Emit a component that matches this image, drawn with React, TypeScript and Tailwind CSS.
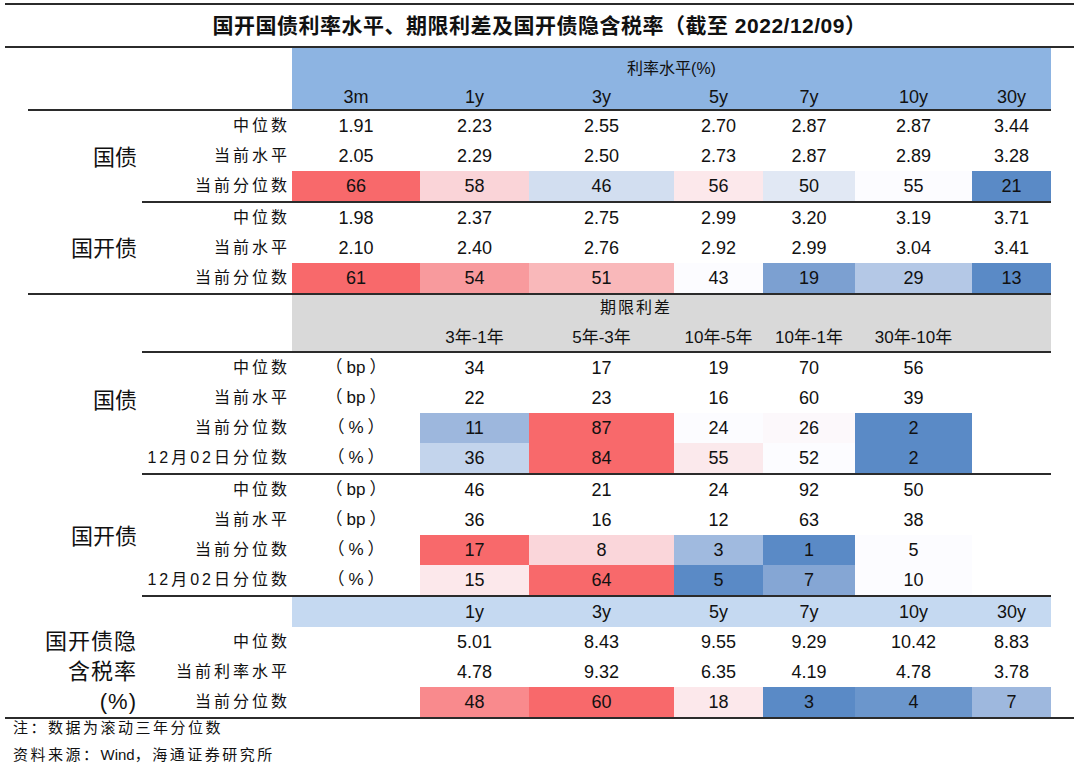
import React from 'react';

type Cell = { v: string; bg?: string };

// column widths of the data area (3m .. 30y), from x=292 to x=1051
const W = ['w-[128px]', 'w-[109px]', 'w-[145px]', 'w-[89px]', 'w-[92px]', 'w-[117px]', 'w-[79px]'];

const c = (v: string, bg?: string): Cell => ({ v, bg });

const rate = [
    {
        group: '国债',
        rows: [
            { label: '中位数', cells: ['1.91', '2.23', '2.55', '2.70', '2.87', '2.87', '3.44'].map((v) => c(v)) },
            { label: '当前水平', cells: ['2.05', '2.29', '2.50', '2.73', '2.87', '2.89', '3.28'].map((v) => c(v)) },
            {
                label: '当前分位数',
                cells: [
                    c('66', 'bg-[#F8696B]'),
                    c('58', 'bg-[#FAD4D8]'),
                    c('46', 'bg-[#D2DEF0]'),
                    c('56', 'bg-[#FCE8EB]'),
                    c('50', 'bg-[#E1E8F4]'),
                    c('55', 'bg-[#FCFCFF]'),
                    c('21', 'bg-[#5A8AC6]'),
                ],
            },
        ],
    },
    {
        group: '国开债',
        rows: [
            { label: '中位数', cells: ['1.98', '2.37', '2.75', '2.99', '3.20', '3.19', '3.71'].map((v) => c(v)) },
            { label: '当前水平', cells: ['2.10', '2.40', '2.76', '2.92', '2.99', '3.04', '3.41'].map((v) => c(v)) },
            {
                label: '当前分位数',
                cells: [
                    c('61', 'bg-[#F8696B]'),
                    c('54', 'bg-[#F89A9D]'),
                    c('51', 'bg-[#F9B8BA]'),
                    c('43', 'bg-[#FCFCFF]'),
                    c('19', 'bg-[#7CA0D1]'),
                    c('29', 'bg-[#B4C8E6]'),
                    c('13', 'bg-[#5A8AC6]'),
                ],
            },
        ],
    },
];

const spread = [
    {
        group: '国债',
        shift: 'pb-[28px]',
        rows: [
            { label: '中位数', cells: [c('bp'), c('34'), c('17'), c('19'), c('70'), c('56'), c('')] },
            { label: '当前水平', cells: [c('bp'), c('22'), c('23'), c('16'), c('60'), c('39'), c('')] },
            {
                label: '当前分位数',
                cells: [
                    c('%'),
                    c('11', 'bg-[#9DB7DD]'),
                    c('87', 'bg-[#F8696B]'),
                    c('24', 'bg-[#FCFCFF]'),
                    c('26', 'bg-[#FCF8FB]'),
                    c('2', 'bg-[#5A8AC6]'),
                    c(''),
                ],
            },
            {
                label: '12月02日分位数',
                cells: [
                    c('%'),
                    c('36', 'bg-[#C3D4EC]'),
                    c('84', 'bg-[#F8696B]'),
                    c('55', 'bg-[#FBE9EC]'),
                    c('52', 'bg-[#FCFCFF]'),
                    c('2', 'bg-[#5A8AC6]'),
                    c(''),
                ],
            },
        ],
    },
    {
        group: '国开债',
        shift: '',
        rows: [
            { label: '中位数', cells: [c('bp'), c('46'), c('21'), c('24'), c('92'), c('50'), c('')] },
            { label: '当前水平', cells: [c('bp'), c('36'), c('16'), c('12'), c('63'), c('38'), c('')] },
            {
                label: '当前分位数',
                cells: [
                    c('%'),
                    c('17', 'bg-[#F8696B]'),
                    c('8', 'bg-[#FAD6DA]'),
                    c('3', 'bg-[#A0BADF]'),
                    c('1', 'bg-[#5A8AC6]'),
                    c('5', 'bg-[#FCFCFF]'),
                    c(''),
                ],
            },
            {
                label: '12月02日分位数',
                cells: [
                    c('%'),
                    c('15', 'bg-[#FCE8EB]'),
                    c('64', 'bg-[#F8696B]'),
                    c('5', 'bg-[#5A8AC6]'),
                    c('7', 'bg-[#85A6D4]'),
                    c('10', 'bg-[#FCFCFF]'),
                    c(''),
                ],
            },
        ],
    },
];

const tax = [
    { label: '中位数', cells: [c(''), c('5.01'), c('8.43'), c('9.55'), c('9.29'), c('10.42'), c('8.83')] },
    { label: '当前利率水平', cells: [c(''), c('4.78'), c('9.32'), c('6.35'), c('4.19'), c('4.78'), c('3.78')] },
    {
        label: '当前分位数',
        cells: [
            c(''),
            c('48', 'bg-[#F98A8D]'),
            c('60', 'bg-[#F8696B]'),
            c('18', 'bg-[#FCE8EB]'),
            c('3', 'bg-[#5A8AC6]'),
            c('4', 'bg-[#6B96CC]'),
            c('7', 'bg-[#9EB8DE]'),
        ],
    },
];

// unit column: full-width style brackets, spaced out around the unit
function Unit({ u }: { u: string }) {
    return (
        <span className="text-[17px]">
            （<span className="px-[4px]">{u}</span>）
        </span>
    );
}

function Row({ label, cells, unit = false }: { label: string; cells: Cell[]; unit?: boolean }) {
    return (
        <div className="flex h-[30px]">
            <div className="w-[150px] pr-[2px] flex items-center justify-end text-[16px] tracking-[3px] whitespace-nowrap">
                {label}
            </div>
            {cells.map((cell, i) => (
                <div key={i} className={`${W[i]} ${cell.bg ?? ''} flex items-center justify-center text-[18px]`}>
                    {unit && i === 0 ? <Unit u={cell.v} /> : cell.v}
                </div>
            ))}
        </div>
    );
}

function HeadLabels({ labels }: { labels: string[] }) {
    return (
        <div className="flex">
            {labels.map((l, i) => (
                <div key={i} className={`${W[i]} text-center whitespace-nowrap`}>
                    {l}
                </div>
            ))}
        </div>
    );
}

export default function App() {
    return (
        <div className="w-[1080px] h-[767px] bg-white text-[#111] font-['Liberation_Sans','Noto_Sans_CJK_SC',sans-serif] overflow-hidden">
            {/* title */}
            <div className="ml-[5px] w-[1069px] mt-[3px] border-t-2 border-b-2 border-[#2b2b2b] h-[45px] flex items-center justify-center">
                <span className="text-[21px] font-bold tracking-[0.5px]">国开国债利率水平、期限利差及国开债隐含税率（截至 2022/12/09）</span>
            </div>

            <div className="ml-[28px] w-[1023px]">
                {/* 利率水平 header */}
                <div className="flex border-b-2 border-[#2b2b2b]">
                    <div className="w-[264px]" />
                    <div className="w-[759px] h-[61px] bg-[#8DB4E2]">
                        <div className="pt-[11px] leading-[20px] text-center text-[16px]">利率水平(%)</div>
                        <div className="mt-[8px] leading-[20px] text-[18px]">
                            <HeadLabels labels={['3m', '1y', '3y', '5y', '7y', '10y', '30y']} />
                        </div>
                    </div>
                </div>

                {/* 利率水平 body */}
                <div className="flex border-b-2 border-[#2b2b2b]">
                    <div className="w-[114px]">
                        {rate.map((g, gi) => (
                            <div
                                key={g.group}
                                className={`${gi === 0 ? 'h-[92px]' : 'h-[90px]'} flex items-center justify-end pr-[5px] text-[22px]`}
                            >
                                {g.group}
                            </div>
                        ))}
                    </div>
                    <div className="w-[909px]">
                        {rate.map((g, gi) => (
                            <div key={g.group} className={gi === 0 ? 'border-b-2 border-[#2b2b2b]' : ''}>
                                {g.rows.map((r) => (
                                    <Row key={r.label} label={r.label} cells={r.cells} />
                                ))}
                            </div>
                        ))}
                    </div>
                </div>

                {/* 期限利差 header */}
                <div className="flex">
                    <div className="w-[114px]" />
                    <div className="w-[909px] flex border-b-2 border-[#2b2b2b]">
                        <div className="w-[150px]" />
                        <div className="w-[759px] h-[56px] bg-[#D9D9D9]">
                            <div className="pt-[3px] pl-[308px] leading-[20px] text-[16px] tracking-[2px]">期限利差</div>
                            <div className="mt-[10px] leading-[20px] text-[17px]">
                                <HeadLabels labels={['', '3年-1年', '5年-3年', '10年-5年', '10年-1年', '30年-10年', '']} />
                            </div>
                        </div>
                    </div>
                </div>

                {/* 期限利差 body */}
                <div className="flex">
                    <div className="w-[114px]">
                        {spread.map((g) => (
                            <div
                                key={g.group}
                                className={`h-[122px] flex items-center justify-end pr-[5px] text-[22px] ${g.shift}`}
                            >
                                {g.group}
                            </div>
                        ))}
                    </div>
                    <div className="w-[909px]">
                        {spread.map((g) => (
                            <div key={g.group} className="border-b-2 border-[#2b2b2b]">
                                {g.rows.map((r) => (
                                    <Row key={r.label} label={r.label} cells={r.cells} unit />
                                ))}
                            </div>
                        ))}
                    </div>
                </div>

                {/* 隐含税率 header */}
                <div className="flex">
                    <div className="w-[264px]" />
                    <div className="w-[759px] h-[30px] bg-[#C5D9F1] flex items-center text-[18px]">
                        <HeadLabels labels={['', '1y', '3y', '5y', '7y', '10y', '30y']} />
                    </div>
                </div>
            </div>

            {/* 隐含税率 body, bottom rule runs the full width */}
            <div className="ml-[5px] w-[1069px] border-b-2 border-[#2b2b2b]">
                <div className="ml-[23px] flex">
                    <div className="w-[114px] pr-[5px] text-right text-[22px] leading-[30px] tracking-[1px]">
                        <div>国开债隐</div>
                        <div>含税率</div>
                        <div>(%)</div>
                    </div>
                    <div className="w-[909px]">
                        {tax.map((r) => (
                            <Row key={r.label} label={r.label} cells={r.cells} />
                        ))}
                    </div>
                </div>
            </div>

            {/* notes */}
            <div className="pl-[13px] text-[15px] tracking-[2.5px]">
                <div className="h-[18px] leading-[18px]">注：数据为滚动三年分位数</div>
                <div className="mt-[9px] h-[18px] leading-[18px]">
                    资料来源：<span className="tracking-normal">Wind</span>，海通证券研究所
                </div>
            </div>
        </div>
    );
}
